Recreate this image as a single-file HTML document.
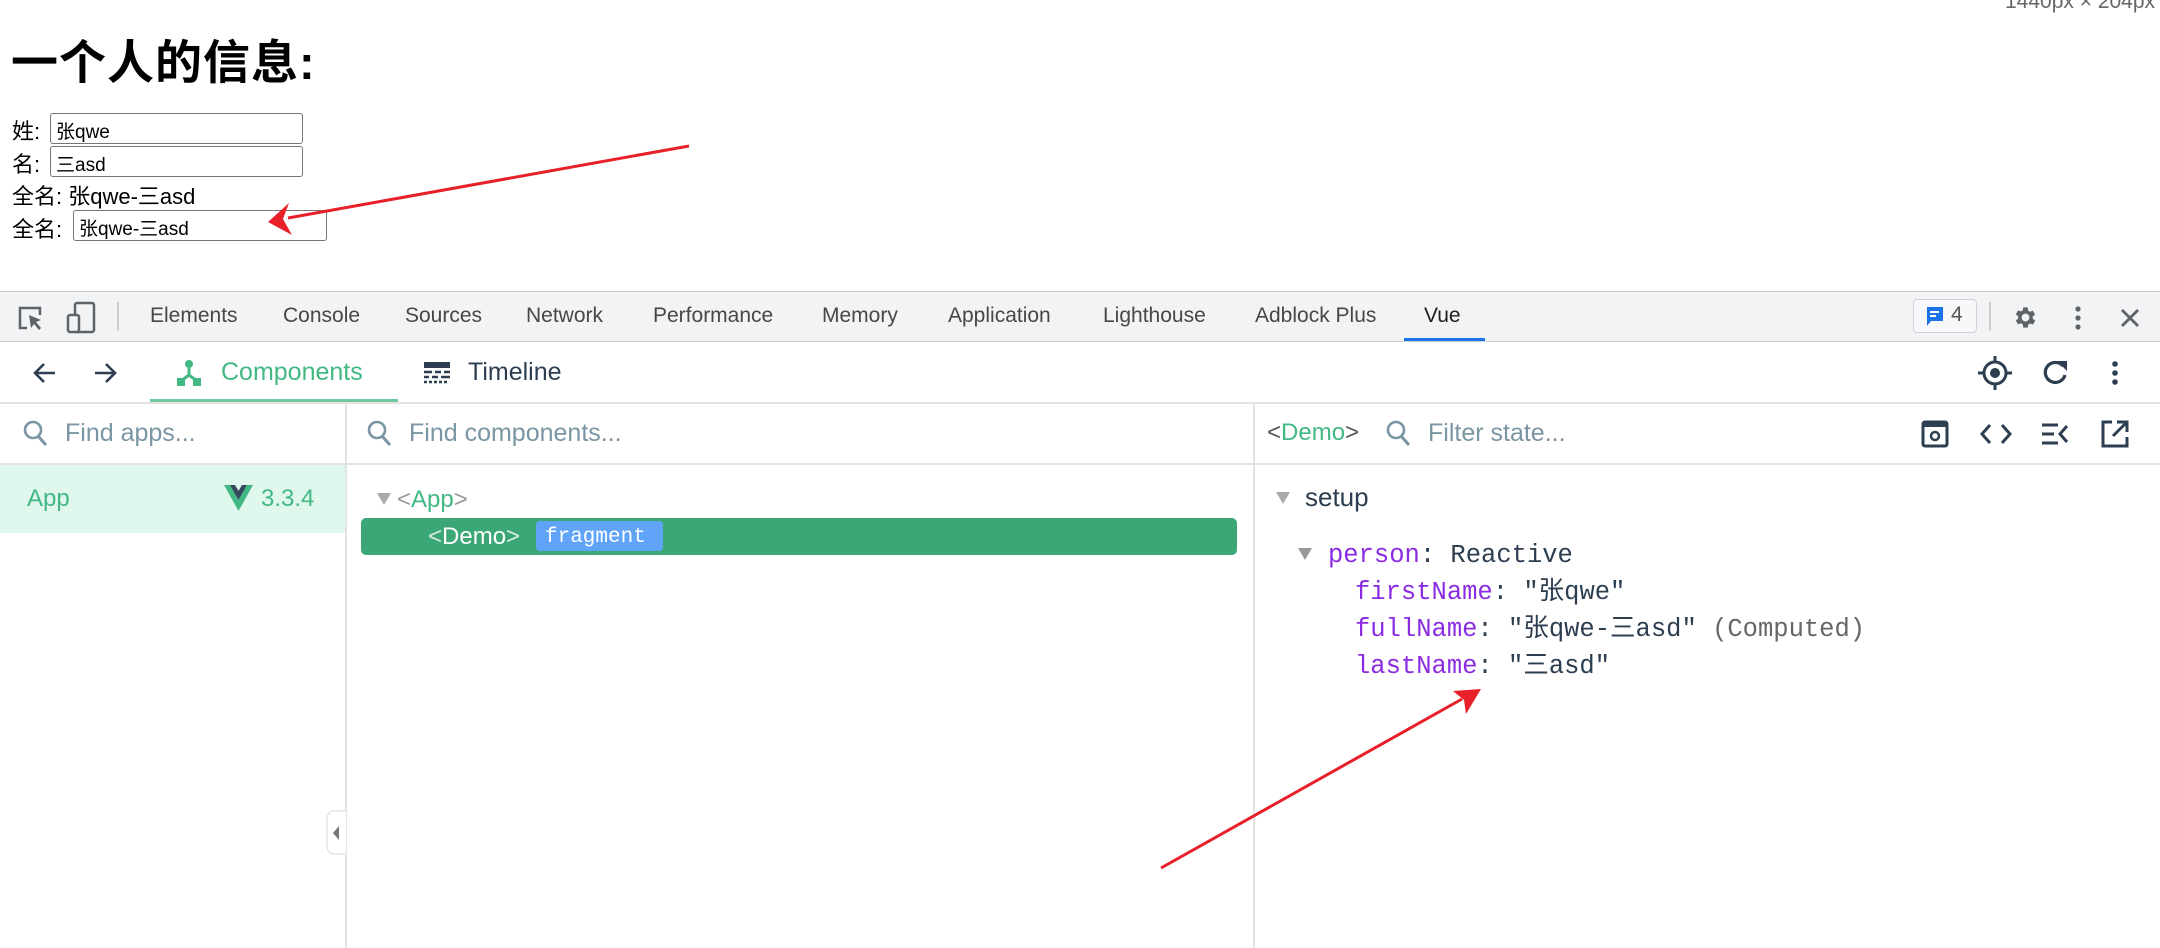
<!DOCTYPE html>
<html><head><meta charset="utf-8">
<style>
*{box-sizing:border-box;margin:0;padding:0}
body{width:2160px;height:948px;overflow:hidden;background:#fff;position:relative;font-family:"Liberation Sans","Noto Sans CJK SC",sans-serif}
.a{position:absolute;white-space:nowrap}
.inp{position:absolute;border:1.5px solid #767676;border-radius:3px;height:31px;font-size:19px;padding:3px 0 0 5px;color:#000}
.lbl{font-size:22px;color:#000}
.tab{font-size:21px;color:#474747;top:304px}
.mono{font-family:"Liberation Mono","Noto Sans CJK SC",monospace;font-size:25.5px;line-height:30px}
.pur{color:#8b2be2}
.gr{color:#42b883}
.ph{color:#7a95a3;font-size:25px}
</style></head><body>
<div class="a" style="left:2005px;top:-10px;font-size:21px;color:#666">1440px × 204px</div>
<div class="a" style="left:11px;top:24px;font-size:47px;font-weight:bold;letter-spacing:1px">一个人的信息:</div>
<div class="a lbl" style="left:12px;top:114px">姓:</div>
<div class="inp" style="left:50px;top:113px;width:253px">张qwe</div>
<div class="a lbl" style="left:12px;top:147px">名:</div>
<div class="inp" style="left:50px;top:146px;width:253px">三asd</div>
<div class="a lbl" style="left:12px;top:179px">全名: 张qwe-三asd</div>
<div class="a lbl" style="left:12px;top:212px">全名:</div>
<div class="inp" style="left:73px;top:210px;width:254px">张qwe-三asd</div>

<div class="a" style="left:0;top:291px;width:2160px;height:51px;background:#f1f3f4;border-top:1.5px solid #cbcdd1;border-bottom:1.5px solid #cbcdd1"></div>
<svg class="a" style="left:16px;top:303px" width="32" height="30" viewBox="0 0 32 30"><path d="M11 25H4V5h20v7" fill="none" stroke="#5f6368" stroke-width="2.5"/><path d="M13 12l12 5-5 2 5 6-2 2-5-6-3 4z" fill="#5f6368"/></svg>
<svg class="a" style="left:66px;top:301px" width="32" height="34" viewBox="0 0 32 34"><rect x="9" y="2" width="19" height="29" rx="2" fill="none" stroke="#5f6368" stroke-width="2.5"/><rect x="2" y="14" width="11" height="17" rx="2" fill="#f1f3f4" stroke="#5f6368" stroke-width="2.5"/></svg>
<div class="a" style="left:117px;top:302px;width:1.5px;height:29px;background:#ccc"></div>
<div class="a tab" style="left:150px">Elements</div>
<div class="a tab" style="left:283px">Console</div>
<div class="a tab" style="left:405px">Sources</div>
<div class="a tab" style="left:526px">Network</div>
<div class="a tab" style="left:653px">Performance</div>
<div class="a tab" style="left:822px">Memory</div>
<div class="a tab" style="left:948px">Application</div>
<div class="a tab" style="left:1103px">Lighthouse</div>
<div class="a tab" style="left:1255px">Adblock Plus</div>
<div class="a tab" style="left:1424px;color:#1f1f1f">Vue</div>
<div class="a" style="left:1404px;top:338px;width:81px;height:3px;background:#1a73e8"></div>
<div class="a" style="left:1913px;top:299px;width:64px;height:34px;border:1.5px solid #d0d3d7;border-radius:4px;background:#f7f8f9"></div>
<svg class="a" style="left:1925px;top:305px" width="20" height="23" viewBox="0 0 20 23"><path d="M2 2h16v14H6l-4 5z" fill="#1a73e8"/><path d="M5 7h9M5 11h6" stroke="#fff" stroke-width="2"/></svg>
<div class="a" style="left:1951px;top:303px;font-size:21px;color:#555">4</div>
<div class="a" style="left:1989px;top:302px;width:1.5px;height:29px;background:#ccc"></div>
<svg class="a" style="left:2012px;top:304px" width="27" height="27" viewBox="0 0 24 24"><path fill="#5f6368" d="M19.4 13a7.5 7.5 0 000-2l2.1-1.6-2-3.5-2.5 1a7 7 0 00-1.7-1L15 3h-4l-.4 2.7a7 7 0 00-1.7 1l-2.5-1-2 3.5L6.5 11a7.5 7.5 0 000 2l-2.1 1.6 2 3.5 2.5-1a7 7 0 001.7 1L11 21h4l.4-2.7a7 7 0 001.7-1l2.5 1 2-3.5zM13 15.5a3.5 3.5 0 110-7 3.5 3.5 0 010 7z" transform="translate(-1 0)"/></svg>
<svg class="a" style="left:2072px;top:304px" width="12" height="28"><circle cx="6" cy="5" r="2.6" fill="#5f6368"/><circle cx="6" cy="14" r="2.6" fill="#5f6368"/><circle cx="6" cy="23" r="2.6" fill="#5f6368"/></svg>
<svg class="a" style="left:2119px;top:307px" width="22" height="22"><path d="M3 3l16 16M19 3L3 19" stroke="#5f6368" stroke-width="2.8"/></svg>

<svg class="a" style="left:32px;top:361px" width="26" height="24" viewBox="0 0 26 24"><path d="M12 3L3 12l9 9M3 12h20" fill="none" stroke="#2c3e50" stroke-width="2.6"/></svg>
<svg class="a" style="left:92px;top:361px" width="26" height="24" viewBox="0 0 26 24"><path d="M14 3l9 9-9 9M23 12H3" fill="none" stroke="#2c3e50" stroke-width="2.6"/></svg>
<svg class="a" style="left:176px;top:359px" width="26" height="28" viewBox="0 0 26 28"><circle cx="13" cy="5" r="4" fill="#42b883"/><path d="M13 8v8L5 22M13 16l8 6" stroke="#42b883" stroke-width="3" fill="none"/><rect x="1" y="19" width="8" height="8" fill="#42b883"/><rect x="17" y="19" width="8" height="8" fill="#42b883"/></svg>
<div class="a gr" style="left:221px;top:358px;font-size:25px">Components</div>
<div class="a" style="left:150px;top:399px;width:248px;height:4px;background:#6fcb9f"></div>
<svg class="a" style="left:423px;top:361px" width="28" height="24" viewBox="0 0 28 24"><rect x="1" y="1" width="26" height="6" fill="#2c3e50"/><path d="M1 11h8M12 11h6M21 11h6M1 16h5M9 16h6M18 16h9M1 21h3M6 21h3M11 21h3M16 21h3M21 21h3" stroke="#2c3e50" stroke-width="2.4"/></svg>
<div class="a" style="left:468px;top:358px;font-size:25px;color:#2c3e50">Timeline</div>
<svg class="a" style="left:1977px;top:354px" width="36" height="38" viewBox="0 0 36 38"><circle cx="18" cy="19" r="11" fill="none" stroke="#2c3e50" stroke-width="3"/><circle cx="18" cy="19" r="5" fill="#2c3e50"/><path d="M18 2v6M18 30v6M1 19h6M29 19h6" stroke="#2c3e50" stroke-width="3"/></svg>
<svg class="a" style="left:2041px;top:358px" width="28" height="30" viewBox="0 0 28 30"><path d="M22 8A10 10 0 1 0 24 17" fill="none" stroke="#2c3e50" stroke-width="3.2"/><path d="M16 3h10v10z" fill="#2c3e50"/></svg>
<svg class="a" style="left:2109px;top:359px" width="12" height="28"><circle cx="6" cy="5" r="2.8" fill="#2c3e50"/><circle cx="6" cy="14" r="2.8" fill="#2c3e50"/><circle cx="6" cy="23" r="2.8" fill="#2c3e50"/></svg>
<div class="a" style="left:0;top:402px;width:2160px;height:1.5px;background:#e3e3e3"></div>

<div class="a" style="left:345px;top:403px;width:1.5px;height:545px;background:#e3e3e3"></div>
<div class="a" style="left:1253px;top:403px;width:1.5px;height:545px;background:#e3e3e3"></div>
<div class="a" style="left:0;top:463px;width:2160px;height:1.5px;background:#e3e3e3"></div>

<svg class="a" style="left:22px;top:419px" width="28" height="30" viewBox="0 0 28 30"><circle cx="11" cy="11" r="8" fill="none" stroke="#7a95a3" stroke-width="2.6"/><path d="M16 17l8 9" stroke="#7a95a3" stroke-width="3"/></svg>
<div class="a ph" style="left:65px;top:419px">Find apps...</div>
<svg class="a" style="left:366px;top:419px" width="28" height="30" viewBox="0 0 28 30"><circle cx="11" cy="11" r="8" fill="none" stroke="#7a95a3" stroke-width="2.6"/><path d="M16 17l8 9" stroke="#7a95a3" stroke-width="3"/></svg>
<div class="a ph" style="left:409px;top:419px">Find components...</div>
<div class="a" style="left:1267px;top:419px;font-size:24px;color:#42b883"><span style="color:#555">&lt;</span>Demo<span style="color:#555">&gt;</span></div>
<svg class="a" style="left:1385px;top:419px" width="28" height="30" viewBox="0 0 28 30"><circle cx="11" cy="11" r="8" fill="none" stroke="#7a95a3" stroke-width="2.6"/><path d="M16 17l8 9" stroke="#7a95a3" stroke-width="3"/></svg>
<div class="a ph" style="left:1428px;top:419px">Filter state...</div>
<svg class="a" style="left:1921px;top:420px" width="28" height="28" viewBox="0 0 28 28"><rect x="2" y="2" width="24" height="24" rx="2" fill="none" stroke="#2c3e50" stroke-width="3"/><rect x="2" y="2" width="24" height="5" fill="#2c3e50"/><circle cx="14" cy="16" r="4" fill="none" stroke="#2c3e50" stroke-width="2.5"/></svg>
<svg class="a" style="left:1980px;top:422px" width="32" height="24" viewBox="0 0 32 24"><path d="M10 3l-8 9 8 9M22 3l8 9-8 9" fill="none" stroke="#2c3e50" stroke-width="3"/></svg>
<svg class="a" style="left:2041px;top:422px" width="28" height="24" viewBox="0 0 28 24"><path d="M1 3h16M1 12h12M1 21h16" stroke="#2c3e50" stroke-width="3"/><path d="M26 4l-7 8 7 8" fill="none" stroke="#2c3e50" stroke-width="3"/></svg>
<svg class="a" style="left:2100px;top:419px" width="30" height="30" viewBox="0 0 30 30"><path d="M12 3H3v24h24v-9" fill="none" stroke="#2c3e50" stroke-width="3"/><path d="M17 3h10v10M27 3L13 17" fill="none" stroke="#2c3e50" stroke-width="3"/></svg>

<div class="a" style="left:0;top:465px;width:345px;height:68px;background:#e0f7ee"></div>
<div class="a gr" style="left:27px;top:485px;font-size:24px">App</div>
<svg class="a" style="left:224px;top:485px" width="29" height="26" viewBox="0 0 29 26"><path d="M0 0h6l8.5 15L23 0h6L14.5 26z" fill="#42b883"/><path d="M6 0h5l3.5 6L18 0h5l-8.5 15z" fill="#35495e"/></svg>
<div class="a gr" style="left:261px;top:485px;font-size:24px">3.3.4</div>

<svg class="a" style="left:377px;top:493px" width="14" height="12"><path d="M0 0h14L7 12z" fill="#aaa"/></svg>
<div class="a gr" style="left:397px;top:486px;font-size:24px"><span style="color:#999">&lt;</span>App<span style="color:#999">&gt;</span></div>
<div class="a" style="left:361px;top:518px;width:876px;height:37px;background:#3ba776;border-radius:5px"></div>
<div class="a" style="left:428px;top:523px;font-size:24px;color:#fff"><span style="opacity:.8">&lt;</span>Demo<span style="opacity:.8">&gt;</span></div>
<div class="a" style="left:536px;top:521px;width:127px;height:30px;background:#5fa4f9;border-radius:4px;color:#fff;font-family:'Liberation Mono',monospace;font-size:21px;line-height:30px;padding:2px 0 0 9px">fragment</div>

<svg class="a" style="left:326px;top:810px" width="20" height="45" viewBox="0 0 20 45"><path d="M20 1H8a7 7 0 00-7 7v29a7 7 0 007 7h12" fill="#fff" stroke="#e6e6e6" stroke-width="1.5"/><path d="M13 16v14l-6-7z" fill="#777"/></svg>

<svg class="a" style="left:1276px;top:492px" width="14" height="12"><path d="M0 0h14L7 12z" fill="#aaa"/></svg>
<div class="a" style="left:1305px;top:482px;font-size:26px;color:#2c3e50">setup</div>
<svg class="a" style="left:1298px;top:548px" width="14" height="12"><path d="M0 0h14L7 12z" fill="#999"/></svg>
<div class="a mono" style="left:1328px;top:541px;color:#2c3e50"><span class="pur">person</span>: Reactive</div>
<div class="a mono" style="left:1355px;top:578px;color:#2c3e50"><span class="pur">firstName</span>: "张qwe"</div>
<div class="a mono" style="left:1355px;top:615px;color:#2c3e50"><span class="pur">fullName</span>: "张qwe-三asd" <span style="color:#666">(Computed)</span></div>
<div class="a mono" style="left:1355px;top:652px;color:#2c3e50"><span class="pur">lastName</span>: "三asd"</div>

<svg class="a" style="left:0;top:0" width="2160" height="948">
<path d="M689 146L288 218" stroke="#e8202a" stroke-width="3"/>
<path d="M268 222L289 203 283 219 292 235z" fill="#e8202a"/>
<path d="M1161 868L1462 699" stroke="#e8202a" stroke-width="3"/>
<path d="M1481 689L1453 691 1464 700 1466 714z" fill="#e8202a"/>
</svg>
</body></html>
